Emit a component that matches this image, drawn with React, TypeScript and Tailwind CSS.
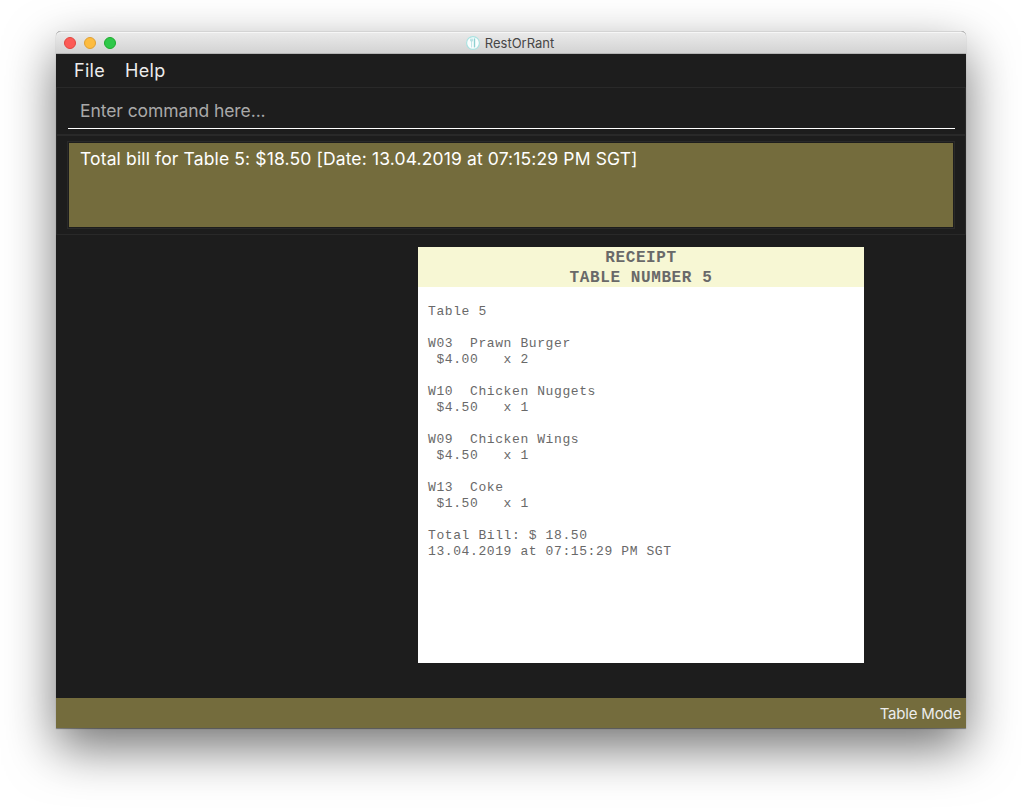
const receiptLines = [
  'Table 5',
  '',
  'W03  Prawn Burger',
  ' $4.00   x 2',
  '',
  'W10  Chicken Nuggets',
  ' $4.50   x 1',
  '',
  'W09  Chicken Wings',
  ' $4.50   x 1',
  '',
  'W13  Coke',
  ' $1.50   x 1',
  '',
  'Total Bill: $ 18.50',
  '13.04.2019 at 07:15:29 PM SGT',
].join('\n');

function AppIcon() {
  return (
    <svg width="14" height="14" viewBox="0 0 14 14" fill="none">
      <circle cx="7" cy="7" r="6.4" fill="#fafefe" stroke="#a9e2e1" strokeWidth="1.1" />
      <path d="M4.6 2.6v2.4h2V2.6M5.6 2.6v8.8" stroke="#a9dcdd" strokeWidth=".8" />
      <path d="M8.5 2.4v9" stroke="#8ed0d1" strokeWidth="1.4" />
    </svg>
  );
}

function TitleBar() {
  return (
    <header className="relative flex h-[23px] shrink-0 items-center justify-center rounded-t-[5px] border-t border-[#d4d4d4] border-b border-b-[#b4b4b4] bg-linear-to-b from-[#ebebeb] to-[#d3d3d3] shadow-[inset_0_1px_0_#f6f6f6]">
      <div className="absolute left-2 top-[5px] flex gap-2">
        <span className="size-3 rounded-full border border-[#e2463f] bg-[#fc5b57]" />
        <span className="size-3 rounded-full border border-[#e0a033] bg-[#fdbc40]" />
        <span className="size-3 rounded-full border border-[#1dac2c] bg-[#2fc84a]" />
      </div>
      <div className="mr-0.5 flex items-center gap-[5px] pt-px">
        <AppIcon />
        <h1 className="text-[13px] leading-4 text-[#464646]">RestOrRant</h1>
      </div>
    </header>
  );
}

export default function App() {
  return (
    <div className="h-[808px] w-[1022px] overflow-hidden bg-white px-14 pt-[31px] font-['Inter',sans-serif]">
      <div className="flex h-[697px] w-[910px] flex-col rounded-t-[5px] bg-[#1d1d1d] shadow-[0_1px_1px_rgba(0,0,0,0.4),0_20px_50px_rgba(0,0,0,0.55)]">
        <TitleBar />
        <nav className="flex h-[33px] shrink-0 gap-[20px] pl-[18px] text-[18px] leading-[33px] tracking-[0.3px] text-[#ececec]">
          <span>File</span>
          <span>Help</span>
        </nav>
        <section className="h-[49px] shrink-0 border-x border-t border-b-2 border-[#292929] px-[11px] pt-[6px]">
          <input
            className="block h-[35px] w-[887px] border-b border-white bg-transparent px-3 pb-0.5 text-[17.5px] tracking-[-0.08px] text-white outline-none placeholder:text-[#a9a9a9]"
            placeholder="Enter command here..."
          />
        </section>
        <section className="h-[99px] shrink-0 border-x border-b border-[#292929] px-[10px] pt-[5px]">
          <div className="h-[88px] w-[888px] border border-[#292929] p-px">
            <p className="h-[84px] bg-[#746c3d] pl-[11px] pt-[5px] text-[17.5px] leading-[22px] tracking-[0.135px] text-white">
              Total bill for Table 5: $18.50 [Date: 13.04.2019 at 07:15:29 PM SGT]
            </p>
          </div>
        </section>
        <main className="flex-1 pl-[362px] pt-3">
          <article className="h-[416px] w-[446px] bg-white font-['Liberation_Mono',monospace] text-[#696969]">
            <h2 className="h-10 bg-[#f7f7d4] pt-px text-center text-[16px] font-bold leading-5 tracking-[0.6px]">
              RECEIPT
              <br />
              TABLE NUMBER 5
            </h2>
            <pre className="px-[10px] pt-[17px] font-['Liberation_Mono',monospace] text-[13px] leading-4 tracking-[0.6px]">{receiptLines}</pre>
          </article>
        </main>
        <footer className="flex h-[30px] shrink-0 items-center justify-end bg-[#746c3d] pr-[5px] pt-[3px] text-[15px] tracking-[-0.2px] text-[#ececec]">
          Table Mode
        </footer>
      </div>
    </div>
  );
}
